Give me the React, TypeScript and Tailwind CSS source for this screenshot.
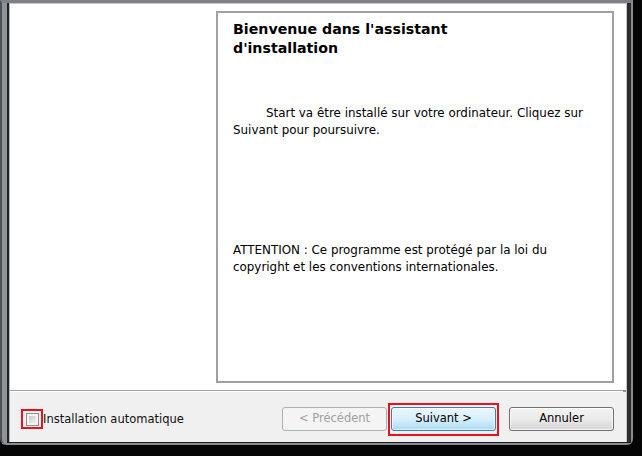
import React from "react";

const font = { fontFamily: '"DejaVu Sans", "Liberation Sans", sans-serif' };

export default function App() {
  return (
    <div className="w-[642px] h-[456px] bg-[#050505] overflow-hidden" style={font}>
      {/* outer frame */}
      <div className="w-[633px] h-[445px] bg-[#8f9296] border-l-[2px] border-l-[#4d5054] border-t-[3px] border-t-[#7e8185] border-r-[2px] border-r-[#8a8d90] border-b-[2px] border-b-[#8a8d90] rounded-b-[6px] pl-[5px]">
        <div className="h-[440px] border-l-[2px] border-l-[#202225] border-r-[4px] border-r-[#2a2c2f] border-b-[1px] border-b-[#1c1d1f]">
          <div className="h-[439px] border-l-[1px] border-l-[#b8b8b8] border-r-[1px] border-r-[#c8c8c8] border-t-[1px] border-t-[#c8c8c8] flex flex-col">
            {/* upper white area */}
            <div className="h-[386px] bg-white pt-[7px] pl-[206px]">
              <div className="w-[398px] h-[372px] border-2 border-[#a0a0a0] pl-[15px] pt-[7px] text-black">
                <div className="text-[14.2px] font-bold leading-[19px]">
                  Bienvenue dans l'assistant
                  <br />
                  d'installation
                </div>
                <div className="mt-[47px] text-[11.9px] leading-[17px]">
                  <div className="pl-[33px]">Start va être installé sur votre ordinateur. Cliquez sur</div>
                  <div>Suivant pour poursuivre.</div>
                </div>
                <div className="mt-[103px] text-[11.9px] leading-[17px]">
                  <div>ATTENTION : Ce programme est protégé par la loi du</div>
                  <div>copyright et les conventions internationales.</div>
                </div>
              </div>
            </div>
            {/* separator */}
            <div className="h-px bg-[#a0a0a0] mr-[3px]" />
            <div className="h-px bg-white mr-[3px]" />
            {/* footer */}
            <div className="flex-1 bg-[#f0f0f0] flex items-center pt-[4px] pl-[11px] pr-[12px]">
              <div className="flex items-center">
                <div className="w-[22px] h-[20px] border-2 border-[#e8121d] flex items-center justify-center">
                  <div className="w-[13px] h-[13px] border border-[#8f8f8f] bg-[#f4f4f4] p-[2px]">
                    <div className="w-full h-full bg-gradient-to-br from-[#c9c9c9] to-[#f2f2f2]" />
                  </div>
                </div>
                <span className="text-[11.5px] text-[#111] leading-[16px]">Installation automatique</span>
              </div>
              <div className="ml-auto flex items-center">
                <div className="w-[105px] h-[24px] rounded-[3px] border border-[#adb2b5] bg-[#f4f4f4] flex items-center justify-center text-[11.5px] text-[#a0a0a0]">
                  &lt; Précédent
                </div>
                <div className="ml-[1px] w-[111px] h-[33px] border-2 border-[#e8121d] flex items-center justify-center">
                  <div className="w-[105px] h-[24px] rounded-[3px] border border-[#3c7fb1] bg-gradient-to-b from-[#eaf6fd] via-[#d9f0fc] to-[#a7d9f5] shadow-[inset_0_0_0_1px_rgba(255,255,255,0.7)] flex items-center justify-center text-[11.5px] text-black">
                    Suivant &gt;
                  </div>
                </div>
                <div className="ml-[10px] w-[105px] h-[24px] rounded-[3px] border border-[#707070] bg-gradient-to-b from-[#f2f2f2] via-[#ebebeb] to-[#d4d4d4] shadow-[inset_0_0_0_1px_rgba(255,255,255,0.8)] flex items-center justify-center text-[11.5px] text-black">
                  Annuler
                </div>
              </div>
            </div>
          </div>
        </div>
      </div>
    </div>
  );
}
